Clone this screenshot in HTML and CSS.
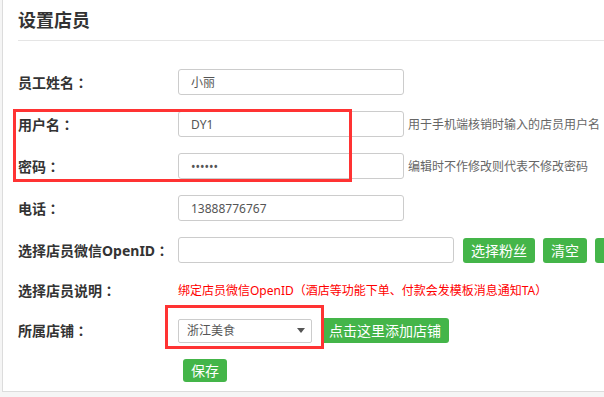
FILE: index.html
```html
<!DOCTYPE html>
<html>

<head>
    <meta charset="utf-8">
    <link rel="stylesheet" href="styles.css">
</head>

<body>
    <div class="panel">
        <div class="panel_head">
            <h3>设置店员</h3>
        </div>
        <form class="staff_form">
            <div class="form_row">
                <label class="form_label">员工姓名<span class="colon">：</span></label>
                <input class="form_input" type="text" value="小丽">
            </div>
            <div class="form_row">
                <label class="form_label">用户名<span class="colon">：</span></label>
                <input class="form_input" type="text" value="DY1">
                <span class="help_text">用于手机端核销时输入的店员用户名</span>
            </div>
            <div class="form_row">
                <label class="form_label">密码<span class="colon">：</span></label>
                <input class="form_input" type="password" value="123456">
                <span class="help_text">编辑时不作修改则代表不修改密码</span>
            </div>
            <div class="form_row">
                <label class="form_label">电话<span class="colon">：</span></label>
                <input class="form_input" type="text" value="13888776767">
            </div>
            <div class="form_row">
                <label class="form_label">选择店员微信OpenID<span class="colon">：</span></label>
                <input class="form_input form_input_wide" type="text" value="">
                <button type="button" class="btn btn_gap">选择粉丝</button>
                <button type="button" class="btn btn_gap_sm">清空</button>
                <button type="button" class="btn btn_gap_sm btn_blank"></button>
            </div>
            <div class="form_row form_row_text">
                <label class="form_label">选择店员说明<span class="colon">：</span></label>
                <span class="warn_text">绑定店员微信OpenID<span class="colon">（</span>酒店等功能下单、付款会发模板消息通知TA<span class="colon">）</span></span>
            </div>
            <div class="form_row">
                <label class="form_label">所属店铺<span class="colon">：</span></label>
                <div class="select_box">
                    <select class="form_select">
                        <option>浙江美食</option>
                    </select>
                </div>
                <button type="button" class="btn btn_gap">点击这里添加店铺</button>
            </div>
            <div class="form_actions">
                <button type="button" class="btn btn_save">保存</button>
            </div>
        </form>
    </div>

    <!-- annotation boxes drawn over the form -->
    <div class="mark mark_user"></div>
    <div class="mark mark_shop"></div>
</body>

</html>
```

FILE: styles.css
```css
html,
body {
    margin: 0;
    padding: 0;
}

body {
    position: relative;
    width: 604px;
    height: 397px;
    overflow: hidden;
    background: #f5f5f5;
    font-family: "Noto Sans", "Noto Sans CJK SC", sans-serif;
    color: #333;
}

.panel {
    width: 680px;
    margin-left: 2px;
    background: #fff;
    border-left: 1px solid #dcdcdc;
    border-bottom: 1px solid #dcdcdc;
}

.panel_head {
    margin-left: 15px;
    height: 40px;
    border-bottom: 1px solid #e5e5e5;
}

.panel_head h3 {
    margin: 0;
    font-size: 18px;
    font-weight: bold;
    line-height: 40px;
    color: #333;
}

.staff_form {
    padding: 28px 0 9px 15px;
}

.form_row {
    display: flex;
    align-items: center;
    height: 26px;
    margin-bottom: 16px;
    white-space: nowrap;
}

.form_row_text {
    height: 22px;
}

.form_label {
    flex: none;
    width: 160px;
    font-size: 14px;
    font-weight: bold;
    color: #333;
}

/* centred full-width punctuation, as in the original UI font */
.colon {
    font-family: "Noto Sans CJK JP", sans-serif;
}

.form_input {
    flex: none;
    box-sizing: border-box;
    width: 226px;
    height: 26px;
    padding: 0 12px;
    border: 1px solid #ccc;
    border-radius: 3px;
    font-family: inherit;
    font-size: 12px;
    color: #555;
    outline: none;
}

.form_input_wide {
    width: 276px;
}

.help_text {
    margin-left: 4px;
    font-size: 12px;
    color: #666;
}

.warn_text {
    font-size: 12px;
    color: #f00;
}

.btn {
    flex: none;
    height: 25px;
    padding: 0 8px;
    border: 0;
    border-radius: 3px;
    background: #44b549;
    color: #fff;
    font-family: inherit;
    font-size: 14px;
    line-height: 25px;
}

.btn_blank {
    width: 44px;
}

.btn_gap {
    margin-left: 9px;
}

.btn_gap_sm {
    margin-left: 8px;
}

.select_box {
    position: relative;
    flex: none;
    width: 134px;
    height: 24px;
}

.select_box::after {
    content: "";
    position: absolute;
    right: 7px;
    top: 10px;
    border-left: 4px solid transparent;
    border-right: 4px solid transparent;
    border-top: 5px solid #555;
}

.form_select {
    -webkit-appearance: none;
    appearance: none;
    box-sizing: border-box;
    width: 134px;
    height: 24px;
    padding: 0 8px;
    border: 1px solid #ccc;
    border-radius: 2px;
    background: #fff;
    font-family: inherit;
    font-size: 12px;
    color: #555;
    outline: none;
}

.form_actions {
    padding-left: 165px;
}

.btn_save {
    height: 23px;
    line-height: 23px;
}

.mark {
    position: absolute;
    box-sizing: border-box;
    border: 3px solid #f33;
}

.mark_user {
    left: 13px;
    top: 109px;
    width: 339px;
    height: 73px;
}

.mark_shop {
    left: 165px;
    top: 305px;
    width: 159px;
    height: 44px;
}
```
